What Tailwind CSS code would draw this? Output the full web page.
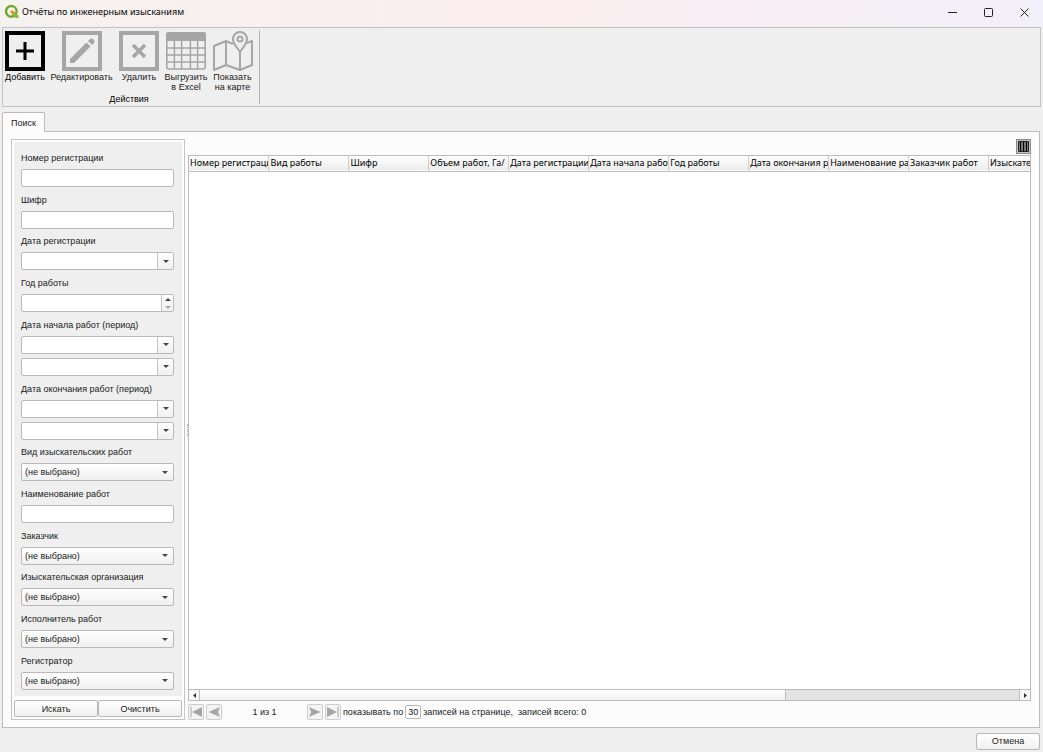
<!DOCTYPE html>
<html lang="ru">
<head>
<meta charset="utf-8">
<meta name="viewport" content="width=device-width, initial-scale=1">
<title>Отчёты по инженерным изысканиям</title>
<script src="https://cdn.jsdelivr.net/npm/@tailwindcss/browser@4"></script>
</head>
<body class="flex h-screen flex-col overflow-hidden bg-[#efefef] font-['Liberation_Sans',Arial,sans-serif] text-[9px] leading-[10px] text-[#1a1a1a]">

<header class="flex h-[26px] shrink-0 items-center bg-linear-to-r from-[#f6f2f0] via-[#fcedef] to-[#f2f0fa] pb-[2px] pl-1">
  <svg class="size-4" viewBox="0 0 16 16" aria-hidden="true">
    <circle cx="7.3" cy="7.3" r="5.300" fill="none" stroke="#6fa82c" stroke-width="2.400"/>
    <path d="M8 8h3l3.500 3.700v2.300h-2.800L8 10.500z" fill="#86b83a"/>
    <path d="M6.500 6.500h2.500l1.500 1.700-1.800 1.800L6.500 8.800z" fill="#ee8b2d"/>
  </svg>
  <h1 class="ml-[2px] flex-1 font-['Noto_Sans',sans-serif] text-black">Отчёты по инженерным изысканиям</h1>
  <button aria-label="Свернуть" class="flex h-full w-9 items-center justify-center"><svg class="size-[9px]" viewBox="0 0 9 9"><path d="M0 4.500h9" stroke="#222"/></svg></button>
  <button aria-label="Развернуть" class="flex h-full w-9 items-center justify-center"><svg class="size-[9px]" viewBox="0 0 9 9"><rect x=".5" y=".5" width="8" height="8" rx="1" fill="none" stroke="#222"/></svg></button>
  <button aria-label="Закрыть" class="flex h-full w-[37px] items-center justify-center"><svg class="size-[9px]" viewBox="0 0 9 9"><path d="M.5.5l8 8M8.500.5l-8 8" stroke="#222"/></svg></button>
</header>

<section aria-label="Действия" class="mx-[2px] mt-px flex h-[80px] shrink-0 border border-[#c4c4c4]">
  <div class="my-[2px] flex flex-col border-r border-[#b4b4b4] pt-px pr-[4px]">
    <div class="flex flex-1">
      <button class="flex w-11 flex-col items-center text-black">
        <svg class="mb-px size-10" viewBox="0 0 40 40"><rect x="2" y="2" width="36" height="36" fill="none" stroke="#000" stroke-width="4"/><path d="M20 11v18M11 20h18" stroke="#000" stroke-width="3"/></svg>
        Добавить
      </button>
      <button class="flex w-[69px] flex-col items-center">
        <svg class="mb-px size-10" viewBox="0 0 40 40"><rect x="2" y="2" width="36" height="36" fill="none" stroke="#a6a6a6" stroke-width="4"/><path d="M8 28L24.500 11.500l4 4L12 32H8zM26 10l1.500-1.500a2.800 2.800 0 0 1 4 4L30 14z" fill="#a6a6a6"/></svg>
        Редактировать
      </button>
      <button class="flex w-[46px] flex-col items-center">
        <svg class="mb-px size-10" viewBox="0 0 40 40"><rect x="2" y="2" width="36" height="36" fill="none" stroke="#a6a6a6" stroke-width="4"/><path d="M14 14l12 12M26 14L14 26" stroke="#a6a6a6" stroke-width="3.500"/></svg>
        Удалить
      </button>
      <button class="flex w-12 flex-col items-center">
        <svg class="mb-px size-10" viewBox="0 0 40 40"><path d="M2 1h36q2 0 2 2v7H0V3q0-2 2-2z" fill="#a6a6a6"/><rect x=".8" y="9" width="38.400" height="29" rx="2" fill="none" stroke="#a6a6a6" stroke-width="1.600"/><path d="M8.400 9v29M15.600 9v29M24.400 9v29M31.600 9v29M1 17h38M1 24h38M1 31h38" stroke="#a6a6a6" stroke-width="1.500"/></svg>
        <span>Выгрузить<br>в Excel</span>
      </button>
      <button class="flex w-[45px] flex-col items-center">
        <svg class="mb-px size-10" viewBox="0 0 40 40" fill="none" stroke="#a6a6a6" stroke-width="2" stroke-linejoin="round"><path d="M20 13l-7-3-12 5v24l12-5 14 5 12-5V10l-5 2M13 10v24M27 21v18"/><path d="M27 21c-3-5-7-8-7-13a7 7 0 0 1 14 0c0 5-4 8-7 13z" fill="#efefef"/><circle cx="27" cy="8" r="2.500"/></svg>
        <span>Показать<br>на карте</span>
      </button>
    </div>
    <p class="text-center text-black">Действия</p>
  </div>
</section>

<nav class="relative z-10 mt-[5px] -mb-px ml-[2px] flex shrink-0" role="tablist">
  <button role="tab" aria-selected="true" class="h-5 w-[43px] rounded-t-[2px] border border-b-0 border-[#bcbcbc] bg-[#fcfcfc]">Поиск</button>
</nav>

<main class="mr-[3px] ml-[2px] flex min-h-0 flex-1 border border-[#bcbcbc] bg-[#fcfcfc] px-2 py-[7px]">
  <form class="flex w-[174px] shrink-0 flex-col border border-[#c4c4c4] bg-white p-[2px]">
    <div class="flex flex-1 flex-col justify-between bg-[#efefef] pt-[9px] pr-2 pb-[6px] pl-[7px]">
      <div class="flex flex-col gap-1">
        <label for="num" class="leading-[14px]">Номер регистрации</label>
        <input id="num" class="h-[18px] rounded-[2px] border border-[#b9b9b9] bg-white px-1">
      </div>
      <div class="flex flex-col gap-1">
        <label for="code" class="leading-[14px]">Шифр</label>
        <input id="code" class="h-[18px] rounded-[2px] border border-[#b9b9b9] bg-white px-1">
      </div>
      <div class="flex flex-col gap-1">
        <label for="reg" class="leading-[14px]">Дата регистрации</label>
        <div class="flex h-[18px] overflow-hidden rounded-[2px] border border-[#b9b9b9] bg-white"><input id="reg" class="min-w-0 flex-1 px-1"><button type="button" aria-label="Открыть календарь" class="flex w-4 items-center justify-center border-l border-[#c4c4c4] bg-linear-to-b from-white to-[#f0f0f0]"><svg class="h-[3px] w-[6px]" viewBox="0 0 6 3"><path d="M0 0h6L3 3z" fill="#444"/></svg></button></div>
      </div>
      <div class="flex flex-col gap-1">
        <label for="year" class="leading-[14px]">Год работы</label>
        <div class="flex h-[18px] overflow-hidden rounded-[2px] border border-[#b9b9b9] bg-white"><input id="year" class="min-w-0 flex-1 px-1"><div class="flex w-3 flex-col border-l border-[#c4c4c4] bg-linear-to-b from-white to-[#f0f0f0]"><button type="button" aria-label="Больше" class="flex flex-1 items-center justify-center"><svg class="h-[3px] w-[6px]" viewBox="0 0 6 3"><path d="M0 3h6L3 0z" fill="#444"/></svg></button><button type="button" aria-label="Меньше" class="flex flex-1 items-center justify-center"><svg class="h-[3px] w-[6px]" viewBox="0 0 6 3"><path d="M0 0h6L3 3z" fill="#aaa"/></svg></button></div></div>
      </div>
      <div class="flex flex-col gap-1">
        <label for="start1" class="leading-[14px]">Дата начала работ (период)</label>
        <div class="flex h-[18px] overflow-hidden rounded-[2px] border border-[#b9b9b9] bg-white"><input id="start1" class="min-w-0 flex-1 px-1"><button type="button" aria-label="Открыть календарь" class="flex w-4 items-center justify-center border-l border-[#c4c4c4] bg-linear-to-b from-white to-[#f0f0f0]"><svg class="h-[3px] w-[6px]" viewBox="0 0 6 3"><path d="M0 0h6L3 3z" fill="#444"/></svg></button></div>
        <div class="flex h-[18px] overflow-hidden rounded-[2px] border border-[#b9b9b9] bg-white"><input aria-label="Дата начала работ, по" class="min-w-0 flex-1 px-1"><button type="button" aria-label="Открыть календарь" class="flex w-4 items-center justify-center border-l border-[#c4c4c4] bg-linear-to-b from-white to-[#f0f0f0]"><svg class="h-[3px] w-[6px]" viewBox="0 0 6 3"><path d="M0 0h6L3 3z" fill="#444"/></svg></button></div>
      </div>
      <div class="flex flex-col gap-1">
        <label for="end1" class="leading-[14px]">Дата окончания работ (период)</label>
        <div class="flex h-[18px] overflow-hidden rounded-[2px] border border-[#b9b9b9] bg-white"><input id="end1" class="min-w-0 flex-1 px-1"><button type="button" aria-label="Открыть календарь" class="flex w-4 items-center justify-center border-l border-[#c4c4c4] bg-linear-to-b from-white to-[#f0f0f0]"><svg class="h-[3px] w-[6px]" viewBox="0 0 6 3"><path d="M0 0h6L3 3z" fill="#444"/></svg></button></div>
        <div class="flex h-[18px] overflow-hidden rounded-[2px] border border-[#b9b9b9] bg-white"><input aria-label="Дата окончания работ, по" class="min-w-0 flex-1 px-1"><button type="button" aria-label="Открыть календарь" class="flex w-4 items-center justify-center border-l border-[#c4c4c4] bg-linear-to-b from-white to-[#f0f0f0]"><svg class="h-[3px] w-[6px]" viewBox="0 0 6 3"><path d="M0 0h6L3 3z" fill="#444"/></svg></button></div>
      </div>
      <div class="flex flex-col gap-1">
        <label for="kind" class="leading-[14px]">Вид изыскательских работ</label>
        <div class="grid items-center"><select id="kind" class="col-start-1 row-start-1 h-[18px] appearance-none rounded-[2px] border border-[#b9b9b9] bg-linear-to-b from-white to-[#f0f0f0] px-[3px]"><option>(не выбрано)</option></select><svg class="pointer-events-none col-start-1 row-start-1 mr-[6px] h-[3px] w-[6px] justify-self-end" viewBox="0 0 6 3"><path d="M0 0h6L3 3z" fill="#444"/></svg></div>
      </div>
      <div class="flex flex-col gap-1">
        <label for="name" class="leading-[14px]">Наименование работ</label>
        <input id="name" class="h-[18px] rounded-[2px] border border-[#b9b9b9] bg-white px-1">
      </div>
      <div class="flex flex-col gap-1">
        <label for="client" class="leading-[14px]">Заказчик</label>
        <div class="grid items-center"><select id="client" class="col-start-1 row-start-1 h-[18px] appearance-none rounded-[2px] border border-[#b9b9b9] bg-linear-to-b from-white to-[#f0f0f0] px-[3px]"><option>(не выбрано)</option></select><svg class="pointer-events-none col-start-1 row-start-1 mr-[6px] h-[3px] w-[6px] justify-self-end" viewBox="0 0 6 3"><path d="M0 0h6L3 3z" fill="#444"/></svg></div>
      </div>
      <div class="flex flex-col gap-1">
        <label for="org" class="leading-[14px]">Изыскательская организация</label>
        <div class="grid items-center"><select id="org" class="col-start-1 row-start-1 h-[18px] appearance-none rounded-[2px] border border-[#b9b9b9] bg-linear-to-b from-white to-[#f0f0f0] px-[3px]"><option>(не выбрано)</option></select><svg class="pointer-events-none col-start-1 row-start-1 mr-[6px] h-[3px] w-[6px] justify-self-end" viewBox="0 0 6 3"><path d="M0 0h6L3 3z" fill="#444"/></svg></div>
      </div>
      <div class="flex flex-col gap-1">
        <label for="worker" class="leading-[14px]">Исполнитель работ</label>
        <div class="grid items-center"><select id="worker" class="col-start-1 row-start-1 h-[18px] appearance-none rounded-[2px] border border-[#b9b9b9] bg-linear-to-b from-white to-[#f0f0f0] px-[3px]"><option>(не выбрано)</option></select><svg class="pointer-events-none col-start-1 row-start-1 mr-[6px] h-[3px] w-[6px] justify-self-end" viewBox="0 0 6 3"><path d="M0 0h6L3 3z" fill="#444"/></svg></div>
      </div>
      <div class="flex flex-col gap-1">
        <label for="registrar" class="leading-[14px]">Регистратор</label>
        <div class="grid items-center"><select id="registrar" class="col-start-1 row-start-1 h-[18px] appearance-none rounded-[2px] border border-[#b9b9b9] bg-linear-to-b from-white to-[#f0f0f0] px-[3px]"><option>(не выбрано)</option></select><svg class="pointer-events-none col-start-1 row-start-1 mr-[6px] h-[3px] w-[6px] justify-self-end" viewBox="0 0 6 3"><path d="M0 0h6L3 3z" fill="#444"/></svg></div>
      </div>
    </div>
    <div class="mt-1 grid grid-cols-2">
      <button type="button" class="h-[17px] rounded-[2px] border border-[#b9b9b9] bg-linear-to-b from-white to-[#f0f0f0]">Искать</button>
      <button type="reset" class="h-[17px] rounded-[2px] border border-[#b9b9b9] bg-linear-to-b from-white to-[#f0f0f0]">Очистить</button>
    </div>
  </form>

  <div class="flex w-[3px] shrink-0 items-center justify-end" aria-hidden="true"><div class="h-3 border-r border-dotted border-[#aaa]"></div></div>

  <section aria-label="Результаты" class="flex min-w-0 flex-1 flex-col">
    <button aria-label="Столбцы" class="mb-px size-[15px] self-end border border-[#8a8a8a] bg-[#c4c4c4] p-px"><svg class="size-full" viewBox="0 0 11 11"><path d="M.5.5h10v10H.5z" fill="#c4c4c4" stroke="#222"/><path d="M2.500 1v9M5.500 1v9M8.500 1v9" stroke="#000" stroke-width="1.800"/></svg></button>
    <div class="flex-1 overflow-hidden border border-b-0 border-[#bcbcbc] bg-white">
      <table class="w-[960px] table-fixed border-collapse">
        <thead>
          <tr class="h-[15px] border-b border-[#bcbcbc] bg-linear-to-b from-white to-[#ececec] text-left font-['Noto_Sans',sans-serif] text-black [&>th]:overflow-hidden [&>th]:border-r [&>th]:border-[#cfcfcf] [&>th]:p-0 [&>th]:pl-px [&>th]:font-normal [&>th]:whitespace-nowrap">
            <th>Номер регистрации</th><th>Вид работы</th><th>Шифр</th><th>Объем работ, Га/</th><th>Дата регистрации</th><th>Дата начала работ</th><th>Год работы</th><th>Дата окончания работ</th><th>Наименование работ</th><th>Заказчик работ</th><th>Изыскательская организация</th><th></th>
          </tr>
        </thead>
        <tbody></tbody>
      </table>
    </div>
    <div class="flex h-3 border border-[#bcbcbc] bg-[#e4e4e4]">
      <button aria-label="Влево" class="flex w-[11px] items-center justify-center border-r border-[#bcbcbc] bg-[#f8f8f8]"><svg class="h-[5px] w-[3px]" viewBox="0 0 3 5"><path d="M3 0v5L0 2.500z" fill="#333"/></svg></button>
      <div class="flex-1"><div class="h-full w-[71.500%] border-r border-[#bcbcbc] bg-linear-to-b from-white to-[#f2f2f2]"></div></div>
      <button aria-label="Вправо" class="flex w-[11px] items-center justify-center border-l border-[#bcbcbc] bg-[#f8f8f8]"><svg class="h-[5px] w-[3px]" viewBox="0 0 3 5"><path d="M0 0v5l3-2.500z" fill="#333"/></svg></button>
    </div>
    <div class="mt-[3px] flex h-4 items-center">
      <button aria-label="Первая" class="size-4 rounded-[2px] border border-[#cdcdcd] bg-[#f4f4f4]"><svg viewBox="0 0 14 14"><path d="M2 1.500v11" stroke="#a6a6a6"/><path d="M13 2v10L3 7z" fill="#a6a6a6"/></svg></button>
      <button aria-label="Назад" class="ml-[2px] size-4 rounded-[2px] border border-[#cdcdcd] bg-[#f4f4f4]"><svg viewBox="0 0 14 14"><path d="M13 2l-2 5 2 5L1.500 7z" fill="#a6a6a6"/></svg></button>
      <p class="w-[85px] text-center">1 из 1</p>
      <button aria-label="Вперёд" class="size-4 rounded-[2px] border border-[#cdcdcd] bg-[#f4f4f4]"><svg viewBox="0 0 14 14"><path d="M1 2l2 5-2 5 11.500-5z" fill="#a6a6a6"/></svg></button>
      <button aria-label="Последняя" class="ml-[2px] size-4 rounded-[2px] border border-[#cdcdcd] bg-[#f4f4f4]"><svg viewBox="0 0 14 14"><path d="M12 1.500v11" stroke="#a6a6a6"/><path d="M1 2v10l10-5z" fill="#a6a6a6"/></svg></button>
      <label for="per" class="ml-[2px]">показывать по</label>
      <input id="per" value="30" class="mx-[2px] h-[14px] w-4 rounded-[2px] border border-[#b9b9b9] bg-white text-center">
      <span>записей на странице,</span><span class="ml-[5px]">записей всего: 0</span>
    </div>
  </section>
</main>

<footer class="flex h-6 shrink-0 items-center justify-end pt-1 pr-[3px] pb-[2px]">
  <button class="h-[17px] w-16 rounded-[2px] border border-[#b9b9b9] bg-linear-to-b from-white to-[#f0f0f0]">Отмена</button>
</footer>
</body>
</html>
